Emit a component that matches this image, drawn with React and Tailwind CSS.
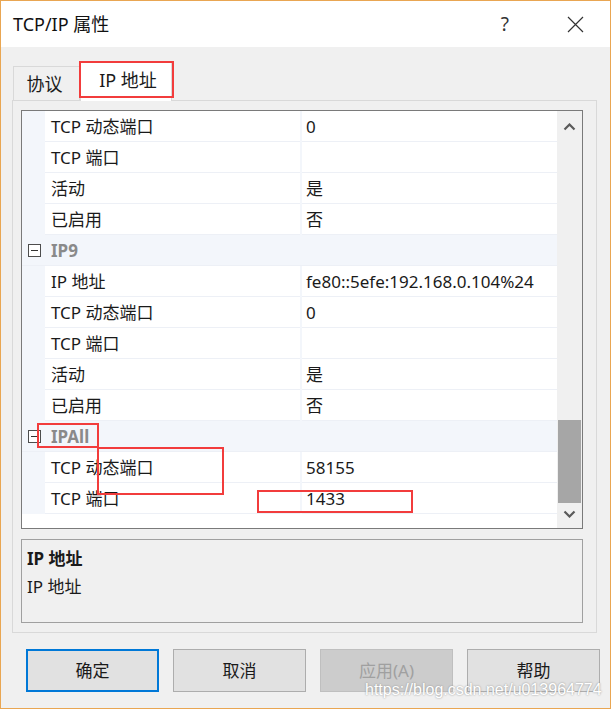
import React from 'react';

const rows = [
    { name: 'TCP 动态端口', value: '0' },
    { name: 'TCP 端口', value: '' },
    { name: '活动', value: '是' },
    { name: '已启用', value: '否' },
    { cat: 'IP9' },
    { name: 'IP 地址', value: 'fe80::5efe:192.168.0.104%24' },
    { name: 'TCP 动态端口', value: '0' },
    { name: 'TCP 端口', value: '' },
    { name: '活动', value: '是' },
    { name: '已启用', value: '否' },
    { cat: 'IPAll' },
    { name: 'TCP 动态端口', value: '58155' },
    { name: 'TCP 端口', value: '1433' },
];

const Collapse = () => (
    <div className="w-[13px] h-[13px] border border-[#4d4d4d] bg-white flex items-center justify-center">
        <div className="w-[7px] h-[1px] bg-[#333]" />
    </div>
);

const Chevron = ({ down }) => (
    <svg width="13" height="8" viewBox="0 0 13 8" className={down ? 'rotate-180' : ''}>
        <path d="M1.5 6.5 L6.5 1.5 L11.5 6.5" fill="none" stroke="#5a5a5a" strokeWidth="2.2" />
    </svg>
);

const PropertyGrid = () => (
    <div className="w-[562px] h-[419px] border border-[#7a7a7a] bg-white flex">
        <div className="w-[535px] flex flex-col">
            {rows.map((r, i) =>
                r.cat ? (
                    <div key={i} className="h-[31px] shrink-0 flex items-center bg-[#f3f6fb] border-b border-[#edf0f6]">
                        <div className="w-[23px] flex justify-center pl-[2px]">
                            <Collapse />
                        </div>
                        <span className="pl-[6px] font-bold text-[#8a8a8a] text-[17px]">{r.cat}</span>
                    </div>
                ) : (
                    <div key={i} className="h-[31px] shrink-0 flex">
                        <div className="w-[23px] bg-[#f3f6fb]" />
                        <div className="w-[255px] flex items-center pl-[6px] border-b border-[#edf0f6] text-[17px] text-[#1a1a1a]">
                            {r.name}
                        </div>
                        <div className="w-[2px] bg-[#f3f6fb]" />
                        <div className="flex-1 flex items-center pl-[4px] border-b border-[#edf0f6] text-[17px] text-[#1a1a1a]">
                            {r.value}
                        </div>
                    </div>
                )
            )}
        </div>
        <div className="flex-1 bg-[#f0f0f0] flex flex-col">
            <div className="h-[30px] flex items-center justify-center pt-[1px]">
                <Chevron />
            </div>
            <div className="flex-1">
                <div className="mt-[279px] h-[83px] mx-[1px] bg-[#a6a6a6]" />
            </div>
            <div className="h-[24px] flex items-center justify-center pb-[4px]">
                <Chevron down />
            </div>
        </div>
    </div>
);

const Button = ({ label, primary, disabled }) => (
    <div
        className={`w-[133px] h-[43px] flex items-center justify-center text-[17px] ${
            primary
                ? 'border-2 border-[#0078d7] bg-[#e1e1e1] text-[#1a1a1a]'
                : disabled
                ? 'border border-[#bfbfbf] bg-[#cccccc] text-[#a0a0a0]'
                : 'border border-[#adadad] bg-[#e1e1e1] text-[#1a1a1a]'
        }`}
    >
        {label}
    </div>
);

export default function App() {
    return (
        <div className="relative w-[611px] h-[709px] border border-[#e9a652] bg-[#f0f0f0] flex flex-col font-['Noto_Sans','Noto_Sans_CJK_SC',sans-serif] leading-none">
            {/* 标题栏 */}
            <div className="h-[46px] shrink-0 bg-white flex items-center">
                <span className="ml-[12px] text-[18px] text-[#111]">TCP/IP 属性</span>
                <span className="ml-auto text-[19px] text-[#333] mr-[58px]">?</span>
                <svg width="17" height="17" viewBox="0 0 17 17" className="mr-[26px]">
                    <path d="M1 1 L16 16 M16 1 L1 16" stroke="#333" strokeWidth="1.2" />
                </svg>
            </div>

            {/* 选项卡 */}
            <div className="h-[53px] shrink-0 flex items-end pl-[12px]">
                <div className="w-[67px] h-[35px] border border-b-0 border-[#d9d9d9] bg-[#f0f0f0] flex items-center justify-center pr-[4px] text-[18px] text-[#1a1a1a] -mb-[1px]">
                    协议
                </div>
                <div className="relative z-10 w-[92px] h-[40px] border border-b-0 border-[#d9d9d9] bg-white flex items-center justify-center pl-[4px] text-[18px] text-[#1a1a1a] -mb-[1px] pb-[3px]">
                    IP 地址
                </div>
            </div>

            {/* 面板 */}
            <div className="ml-[11px] w-[585px] h-[533px] shrink-0 border border-[#d9d9d9] flex flex-col pl-[8px] pt-[9px]">
                <PropertyGrid />
                <div className="mt-[10px] w-[562px] h-[84px] border border-[#a0a0a0] bg-[#f0f0f0] pl-[5px] pt-[4px] text-[17px] text-[#1a1a1a]">
                    <div className="h-[28px] flex items-center font-bold">IP 地址</div>
                    <div className="h-[28px] flex items-center">IP 地址</div>
                </div>
            </div>

            {/* 按钮 */}
            <div className="mt-[16px] ml-[25px] flex gap-[14px]">
                <Button label="确定" primary />
                <Button label="取消" />
                <Button label="应用(A)" disabled />
                <Button label="帮助" />
            </div>

            {/* 红框标注 */}
            <div className="absolute left-[78px] top-[60px] w-[95px] h-[37px] border-2 border-[#f23c3c] z-20" />
            <div className="absolute left-[36px] top-[422px] w-[62px] h-[25px] border-2 border-[#f23c3c]" />
            <div className="absolute left-[96px] top-[446px] w-[127px] h-[48px] border-2 border-[#f23c3c]" />
            <div className="absolute left-[256px] top-[489px] w-[156px] h-[23px] border-2 border-[#f23c3c]" />

            {/* 水印 */}
            <div className="absolute left-[364px] top-[681px] text-[16px] text-white font-['Liberation_Sans',sans-serif] [text-shadow:0_0_2px_#888]">
                https://blog.csdn.net/u013964774
            </div>
        </div>
    );
}
